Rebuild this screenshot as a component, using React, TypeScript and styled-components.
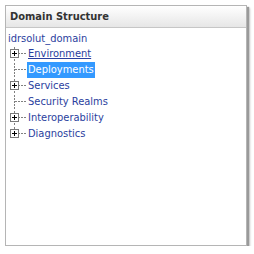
import React from "react";
import styled, { createGlobalStyle } from "styled-components";

const Global = createGlobalStyle`
  html, body { margin: 0; padding: 0; background: #fff; }
  body { font-family: "DejaVu Sans Condensed", "DejaVu Sans", Verdana, sans-serif; }
`;

const Panel = styled.div`
  margin: 5px 0 0 5px;
  width: 242px;
  height: 241px;
  border: 1px solid #b5b5b5;
  background: #fff;
  box-sizing: border-box;
  box-shadow: 2px 2px 1px #9a9a9a, 3px 3px 2px #c8c8c8;
  display: flex;
  flex-direction: column;
`;

const Header = styled.div`
  height: 21px;
  display: flex;
  align-items: center;
  padding-left: 4px;
  background: linear-gradient(#ffffff, #e6e6e6);
  border-bottom: 1px solid #c6c6c6;
  font-family: "DejaVu Sans Condensed", "DejaVu Sans", Verdana, sans-serif;
  font-weight: bold;
  font-size: 11px;
  color: #333;
`;

const Body = styled.div`
  padding: 3px 0 0 2px;
  font-size: 11px;
  font-family: "DejaVu Sans Condensed", "DejaVu Sans", Verdana, sans-serif;
`;

const Root = styled.div`
  height: 15px;
  line-height: 15px;
  color: #2a3e9e;
`;

const Row = styled.div`
  display: flex;
  align-items: center;
  height: 16px;
`;

const Label = styled.span<{ $selected?: boolean; $focus?: boolean }>`
  padding: 0 1px;
  line-height: 16px;
  color: ${(p) => (p.$selected ? "#fff" : "#2a3e9e")};
  background: ${(p) => (p.$selected ? "#3399ff" : "transparent")};
  text-decoration: ${(p) => (p.$focus ? "underline" : "none")};
`;

const Connector: React.FC<{ expandable: boolean; last: boolean }> = ({ expandable, last }) => (
  <svg width="19" height="16" viewBox="0 0 19 16" style={{ display: "block", flex: "none" }}>
    <line
      x1="6.5"
      y1={-2}
      x2="6.5"
      y2={last ? 8 : 16}
      stroke="#808080"
      strokeDasharray="2 1"
    />
    <line x1="7" y1="7.5" x2="19" y2="7.5" stroke="#808080" strokeDasharray="2 1" />
    {expandable && (
      <g>
        <rect x="2.5" y="3.5" width="8" height="8" fill="#fff" stroke="#7a7a7a" />
        <line x1="4" y1="7.5" x2="9" y2="7.5" stroke="#000" />
        <line x1="6.5" y1="5" x2="6.5" y2="10" stroke="#000" />
      </g>
    )}
  </svg>
);

const items = [
  { name: "Environment", expandable: true, focus: true },
  { name: "Deployments", expandable: false, selected: true },
  { name: "Services", expandable: true },
  { name: "Security Realms", expandable: false },
  { name: "Interoperability", expandable: true },
  { name: "Diagnostics", expandable: true },
];

export default function App() {
  return (
    <>
      <Global />
      <Panel>
        <Header>Domain Structure</Header>
        <Body>
          <Root>idrsolut_domain</Root>
          {items.map((it, i) => (
            <Row key={it.name}>
              <Connector expandable={it.expandable} last={i === items.length - 1} />
              <Label $selected={it.selected} $focus={it.focus}>
                {it.name}
              </Label>
            </Row>
          ))}
        </Body>
      </Panel>
    </>
  );
}
